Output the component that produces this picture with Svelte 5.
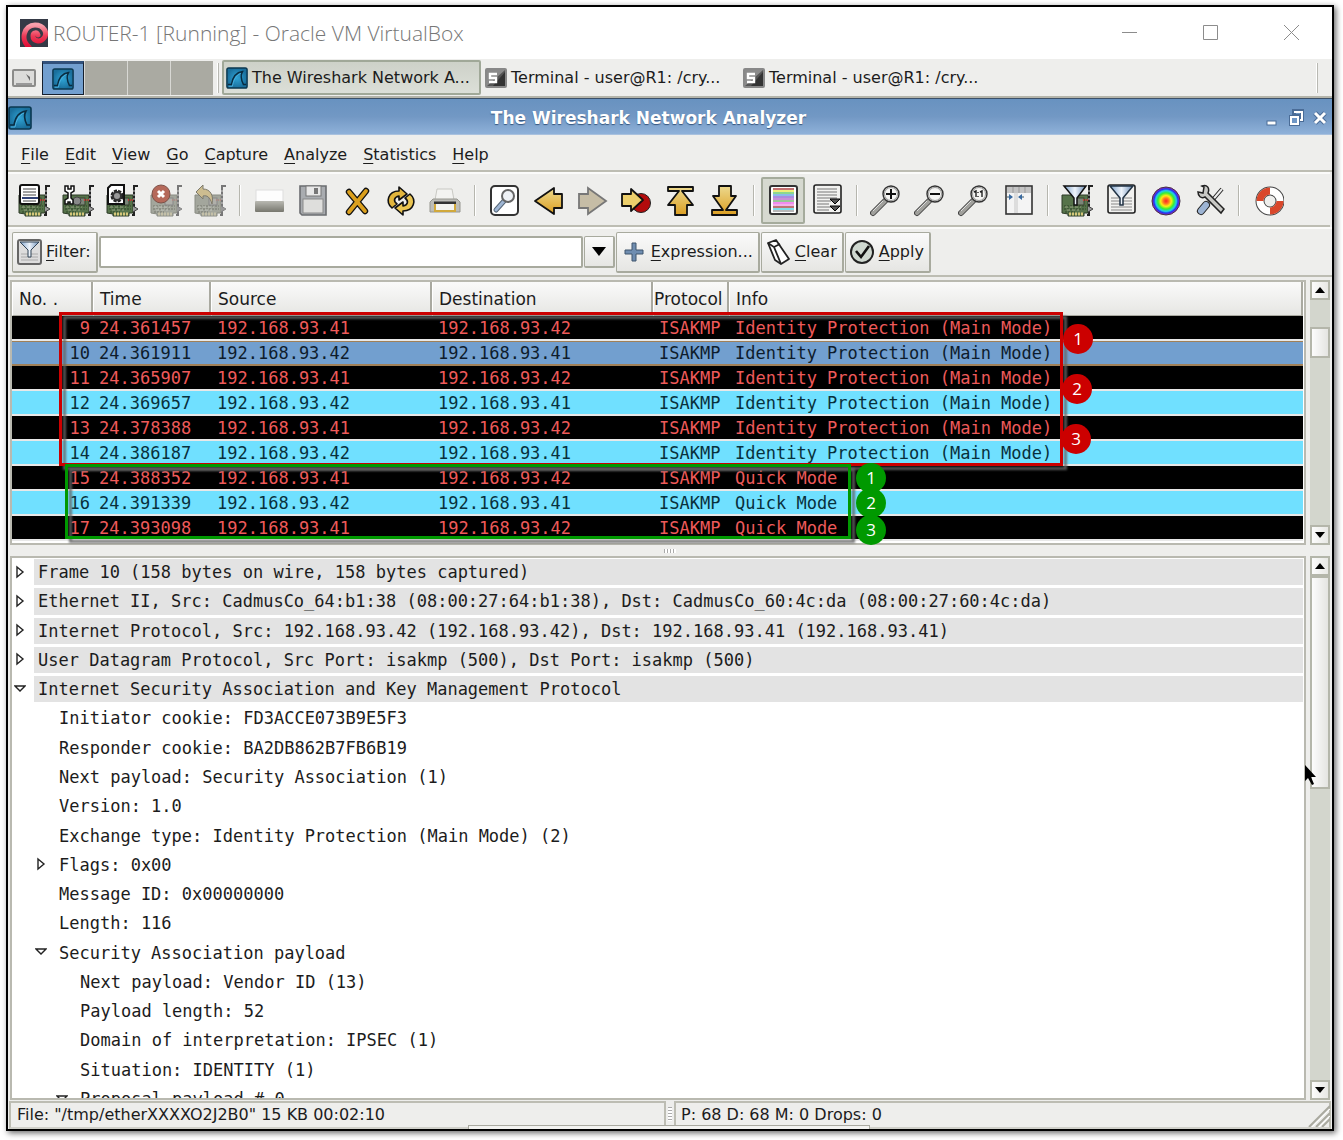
<script lang="ts">
  const columns = ['No. .', 'Time', 'Source', 'Destination', 'Protocol', 'Info'];
  const A = '192.168.93.41';
  const B = '192.168.93.42';
  const MAIN = 'Identity Protection (Main Mode)';
  const packets = [
    { no: 9, time: '24.361457', src: A, dst: B, info: MAIN, tone: 'dark' },
    { no: 10, time: '24.361911', src: B, dst: A, info: MAIN, tone: 'selected' },
    { no: 11, time: '24.365907', src: A, dst: B, info: MAIN, tone: 'dark' },
    { no: 12, time: '24.369657', src: B, dst: A, info: MAIN, tone: 'cyan' },
    { no: 13, time: '24.378388', src: A, dst: B, info: MAIN, tone: 'dark' },
    { no: 14, time: '24.386187', src: B, dst: A, info: MAIN, tone: 'cyan' },
    { no: 15, time: '24.388352', src: A, dst: B, info: 'Quick Mode', tone: 'dark' },
    { no: 16, time: '24.391339', src: B, dst: A, info: 'Quick Mode', tone: 'cyan' },
    { no: 17, time: '24.393098', src: A, dst: B, info: 'Quick Mode', tone: 'dark' }
  ];
  const tree = [
    { level: 0, arrow: 'closed', text: 'Frame 10 (158 bytes on wire, 158 bytes captured)' },
    { level: 0, arrow: 'closed', text: 'Ethernet II, Src: CadmusCo_64:b1:38 (08:00:27:64:b1:38), Dst: CadmusCo_60:4c:da (08:00:27:60:4c:da)' },
    { level: 0, arrow: 'closed', text: 'Internet Protocol, Src: 192.168.93.42 (192.168.93.42), Dst: 192.168.93.41 (192.168.93.41)' },
    { level: 0, arrow: 'closed', text: 'User Datagram Protocol, Src Port: isakmp (500), Dst Port: isakmp (500)' },
    { level: 0, arrow: 'open', text: 'Internet Security Association and Key Management Protocol' },
    { level: 1, arrow: '', text: 'Initiator cookie: FD3ACCE073B9E5F3' },
    { level: 1, arrow: '', text: 'Responder cookie: BA2DB862B7FB6B19' },
    { level: 1, arrow: '', text: 'Next payload: Security Association (1)' },
    { level: 1, arrow: '', text: 'Version: 1.0' },
    { level: 1, arrow: '', text: 'Exchange type: Identity Protection (Main Mode) (2)' },
    { level: 1, arrow: 'closed', text: 'Flags: 0x00' },
    { level: 1, arrow: '', text: 'Message ID: 0x00000000' },
    { level: 1, arrow: '', text: 'Length: 116' },
    { level: 1, arrow: 'open', text: 'Security Association payload' },
    { level: 2, arrow: '', text: 'Next payload: Vendor ID (13)' },
    { level: 2, arrow: '', text: 'Payload length: 52' },
    { level: 2, arrow: '', text: 'Domain of interpretation: IPSEC (1)' },
    { level: 2, arrow: '', text: 'Situation: IDENTITY (1)' },
    { level: 2, arrow: 'open', text: 'Proposal payload # 0' }
  ];
  const menus = ['File', 'Edit', 'View', 'Go', 'Capture', 'Analyze', 'Statistics', 'Help'];
  const tools = [
    'interfaces', 'options', 'start', 'stop', 'restart', '|',
    'open', 'save', 'close', 'reload', 'print', '|',
    'find', 'back', 'forward', 'goto', 'first', 'last', '|',
    'colorize', 'autoscroll', '|',
    'zoom in', 'zoom out', 'zoom 1:1', 'resize columns', '|',
    'capture filters', 'display filters', 'coloring rules', 'preferences', '|', 'help'
  ];
  const stripes = ['#a33', '#e8e840', '#5cc85c', '#5aa0e0', '#8a5ad0', '#b060c8', '#6ab06a', '#e85ae8', '#f090e0', '#a03a3a', '#4ad0e0', '#999'];
  let filter = $state('');
</script>

{#snippet fin(size)}
  <svg class="fin" width={size} height={size} viewBox="0 0 24 24" aria-hidden="true">
    <rect x="1" y="1" width="22" height="22" rx="2" fill="url(#finbg)" stroke="#0b3850" stroke-width="1.6" />
    <path d="M2 19H6C7 13 10 6 18 5C15 10 17 15 19 19H22" fill="none" stroke="#0a2c40" stroke-width="1.6" />
    <path d="M3 21H7C8 15 11 9 16 7" fill="none" stroke="#4db4e0" stroke-width="1" />
  </svg>
{/snippet}

{#snippet term()}
  <svg width="22" height="20" viewBox="0 0 22 20" aria-hidden="true">
    <rect x="1" y="1" width="20" height="18" rx="1" fill="#555" stroke="#888" stroke-width="2" />
    <path d="M2 2H20L2 18Z" fill="#8b8b8b" />
    <path d="M20 4V18H8Z" fill="#333" />
    <path d="M12 6H5V10H11V14H4" fill="none" stroke="#fff" stroke-width="2.4" />
  </svg>
{/snippet}

{#snippet card(faded)}
  <g>
    <path d="M1 11H27V29H23V32H7V30L1 29Z" fill={faded ? '#a3a69c' : '#56734a'} stroke={faded ? '#8a8c83' : '#2c3a26'} stroke-width="1" />
    <path d="M3 22H25M3 25H25M4 28H14" stroke={faded ? '#77796f' : '#2f4428'} stroke-width="1" stroke-dasharray="2 1" />
    <path d="M4 23H20M6 26H18" stroke={faded ? '#c2c4bb' : '#98a384'} stroke-width="1" stroke-dasharray="3 2" />
    <rect x="15" y="14" width="8" height="7" fill={faded ? '#b0b0aa' : '#7b8578'} stroke={faded ? '#888' : '#39432f'} />
    <path d="M22 16H27" stroke={faded ? '#b08a84' : '#c33'} stroke-width="2" stroke-dasharray="1 1" />
    <path d="M8 30H23" stroke={faded ? '#c4c0a8' : '#d6c77a'} stroke-width="3" stroke-dasharray="2 1" />
    <path d="M32 2H28V31H26" fill="none" stroke={faded ? '#777' : '#222'} stroke-width="2" />
    <path d="M27 22L32 25L27 28" fill="#999" stroke={faded ? '#888' : '#444'} stroke-width="1" />
    <path d="M28 6V20" stroke="#ccc" stroke-width="1" stroke-dasharray="2 2" />
  </g>
{/snippet}

{#snippet lens(mark)}
  <path d="M3 29L15 17" stroke="#444" stroke-width="6" stroke-linecap="round" />
  <path d="M3 29L15 17" stroke="#a0a09c" stroke-width="4" stroke-linecap="round" />
  <path d="M3 27L13 17" stroke="#ddd" stroke-width="1" />
  <circle cx="21" cy="10" r="8" fill="#e6e6e2" stroke="#333" stroke-width="1.4" />
  <circle cx="21" cy="10" r="6.5" fill="#f6f6f4" stroke="#999" stroke-width="1" />
  {#if mark === '+'}<path d="M16 10H26M21 5V15" stroke="#111" stroke-width="2" />{/if}
  {#if mark === '-'}<path d="M16 10H26" stroke="#111" stroke-width="2" />{/if}
  {#if mark === '1'}<path d="M16 8L18 7V13M22 8L24 7V13M20 8V9M20 12V13" fill="none" stroke="#222" stroke-width="1.4" />{/if}
{/snippet}

{#snippet icon(name)}
  <svg width="32" height="34" viewBox="0 0 32 34" aria-hidden="true">
    {#if name === 'interfaces'}
      {@render card(false)}
      <rect x="2" y="1" width="19" height="19" rx="2" fill="#fff" stroke="#111" stroke-width="2" />
      <path d="M5 5H18M5 8H18M5 11H18M5 17H18" stroke="#444" stroke-width="1" />
      <path d="M4 14H20" stroke="#347" stroke-width="2" />
    {:else if name === 'options'}
      {@render card(false)}
      <circle cx="15" cy="17" r="4" fill="#888" stroke="#444" />
      <path d="M3 2V7L6 9V14L3 16V20H6V18H8V20H11V16L9 14V9L12 7V2H9V5H6V2Z" fill="#fff" stroke="#111" stroke-width="1.5" />
    {:else if name === 'start'}
      {@render card(false)}
      <path d="M5 1H18V20H2V4Z" fill="#fff" stroke="#111" stroke-width="2" />
      <circle cx="11" cy="12" r="5" fill="none" stroke="#222" stroke-width="3" stroke-dasharray="3 1" />
      <circle cx="11" cy="12" r="4" fill="#999" stroke="#333" stroke-width="2" />
    {:else if name === 'stop'}
      {@render card(true)}
      <circle cx="11" cy="10" r="9" fill="#b5695a" stroke="#7d5148" />
      <path d="M8 7L14 13M14 7L8 13" stroke="#fff" stroke-width="3" />
    {:else if name === 'restart'}
      {@render card(true)}
      <path d="M2 8L9 1V5C16 5 20 11 18 20C16 13 13 11 9 12V15Z" fill="#cdbd90" stroke="#7d7a6c" />
    {:else if name === 'open'}
      <rect x="3" y="6" width="27" height="13" fill="#fdfdfd" stroke="#ddd" />
      <rect x="2" y="17" width="29" height="11" rx="1" fill="url(#drawer)" />
    {:else if name === 'save'}
      <path d="M3 2H29V31H5L3 29Z" fill="#a9acb0" stroke="#6b6d70" stroke-width="1.6" />
      <rect x="9" y="2" width="15" height="10" fill="#e8e8e8" stroke="#777" />
      <rect x="17" y="4" width="4" height="6" fill="#777" />
      <rect x="6" y="15" width="20" height="14" fill="#dededc" stroke="#8a8a8a" />
    {:else if name === 'close'}
      <path d="M8 8L24 27M25 7L8 28" stroke="#111" stroke-width="6.4" stroke-linecap="round" />
      <path d="M8 8L24 27M25 7L8 28" stroke="#dba01e" stroke-width="3.8" stroke-linecap="round" />
    {:else if name === 'reload'}
      <path d="M7 24C0 18 3 7 14 7V3L22 10L14 16V12C9 13 8 17 12 20Z" fill="#e2b53c" stroke="#111" stroke-width="1.6" stroke-linejoin="round" />
      <path d="M25 10C32 16 29 27 18 27V31L10 24L18 18V22C23 21 24 17 20 14Z" fill="#eac552" stroke="#111" stroke-width="1.6" stroke-linejoin="round" />
    {:else if name === 'print'}
      <path d="M8 5H23L25 16H6Z" fill="#f3f3f1" stroke="#c9c9c4" />
      <path d="M4 15H28L31 18V28H1V18Z" fill="#bdbdb8" stroke="#96968f" />
      <path d="M5 19H27" stroke="#333" stroke-width="3" />
      <path d="M6 20V27H26V20" fill="#f4f4f0" stroke="#d1a93c" stroke-width="2" />
    {:else if name === 'find'}
      <rect x="3" y="2" width="27" height="29" rx="4" fill="#fff" stroke="#333" stroke-width="2" />
      <path d="M8 26L16 17" stroke="#567" stroke-width="5" stroke-linecap="round" />
      <path d="M8 26L16 17" stroke="#9fb6d4" stroke-width="3" stroke-linecap="round" />
      <circle cx="20" cy="12" r="6" fill="#eef1f5" stroke="#666" stroke-width="2" />
    {:else if name === 'back'}
      <path d="M3 17L22 4V10H30V24H22V30Z" fill="url(#gold)" stroke="#111" stroke-width="1.8" stroke-linejoin="round" />
    {:else if name === 'forward'}
      <path d="M30 17L12 4V10H3V24H12V30Z" fill="#c6bda6" stroke="#777" stroke-width="1.8" />
    {:else if name === 'goto'}
      <circle cx="21" cy="19" r="9.5" fill="#b30c0c" stroke="#222" stroke-width="1" />
      <path d="M23 16L11 5V10H2V22H11V27Z" fill="#eccf6c" stroke="#111" stroke-width="1.8" stroke-linejoin="round" />
    {:else if name === 'first'}
      <path d="M4 3H29V7H18L29 21H23V31H11V21H4L15 7H4Z" fill="url(#gold)" stroke="#111" stroke-width="1.8" stroke-linejoin="round" />
    {:else if name === 'last'}
      <path d="M4 31H29V26H18L28 12H23V2H11V12H5L15 26H4Z" fill="url(#gold)" stroke="#111" stroke-width="1.8" stroke-linejoin="round" />
    {:else if name === 'colorize'}
      <rect x="3" y="2" width="27" height="28" rx="2" fill="#fff" stroke="#333" stroke-width="2" />
      {#each stripes as c, i}<path d="M6 {5 + i * 2}H27" stroke={c} stroke-width="1.4" />{/each}
    {:else if name === 'autoscroll'}
      <rect x="3" y="1" width="27" height="28" rx="2" fill="#f2f2f0" stroke="#222" stroke-width="1.6" />
      <path d="M6 5H26M6 8H26M6 11H26M6 14H26M6 17H20M6 20H18M6 23H20M6 26H18" stroke="#777" stroke-width="1" />
      <path d="M19 15H29L24 20ZM19 22H29L24 27Z" fill="#555" stroke="#000" />
    {:else if name === 'zoom in'}{@render lens('+')}
    {:else if name === 'zoom out'}{@render lens('-')}
    {:else if name === 'zoom 1:1'}{@render lens('1')}
    {:else if name === 'resize columns'}
      <rect x="4" y="2" width="26" height="28" fill="#f4f4f4" stroke="#333" stroke-width="1.6" />
      <path d="M5 3H29V9H5Z" fill="#c4c4c4" />
      <path d="M12 9H16V29H12Z" fill="#ddd" />
      <path d="M11 3V9M17 3V9M23 3V9" stroke="#999" />
      <path d="M5 13H10M22 13H17" stroke="#356" stroke-width="1" />
      <path d="M7 10L11 13L7 16ZM20 10L16 13L20 16Z" fill="#3a6aa0" />
    {:else if name === 'capture filters'}
      {@render card(false)}
      <path d="M3 2H25L16 14V21H13V14Z" fill="url(#glass)" stroke="#111" stroke-width="1.5" />
    {:else if name === 'display filters'}
      <rect x="3" y="1" width="27" height="28" rx="2" fill="#f2f2f0" stroke="#222" stroke-width="1.6" />
      <path d="M6 14H27M6 17H27M6 20H27M6 23H27M6 26H27" stroke="#888" stroke-width="1" />
      <path d="M5 2H28L18 14V21H15V14Z" fill="url(#glass)" stroke="#234" stroke-width="1.5" />
    {:else if name === 'coloring rules'}
      <circle cx="17" cy="17" r="14" fill="url(#rainbow)" stroke="#434" stroke-width="1" />
    {:else if name === 'preferences'}
      <g transform="translate(2 0)">
        <path d="M27 5L15 19" stroke="#222" stroke-width="4" />
        <path d="M27 5L15 19" stroke="#eee" stroke-width="2" />
        <path d="M6 27L11 21" stroke="#222" stroke-width="8" stroke-linecap="round" />
        <path d="M6 27L11 21" stroke="#9db4d3" stroke-width="6" stroke-linecap="round" />
        <path d="M3 8L8 9L9 3L7 2C12 0 15 4 13 9L29 25L26 29L10 13C6 15 3 12 3 8Z" fill="#c9c9c5" stroke="#222" stroke-width="1.5" />
      </g>
    {:else}
      <circle cx="18" cy="17" r="10" fill="none" stroke="#444" stroke-width="9" />
      <circle cx="18" cy="17" r="10" fill="none" stroke="#fff" stroke-width="7" />
      <path d="M8 17A10 10 0 0 1 18 7M28 17A10 10 0 0 1 18 27" fill="none" stroke="#d9472b" stroke-width="7" />
    {/if}
  </svg>
{/snippet}

{#snippet scrollbar(before, thumb, after)}
  <div class="scrollbar">
    <button class="step" aria-label="Scroll up"><svg width="10" height="6" viewBox="0 0 10 6"><path d="M5 0L10 6H0Z" /></svg></button>
    <div class="trough">
      <div style="flex:{before}"></div>
      <div class="thumb" style="flex:{thumb}"></div>
      <div style="flex:{after}"></div>
    </div>
    <button class="step" aria-label="Scroll down"><svg width="10" height="6" viewBox="0 0 10 6"><path d="M0 0H10L5 6Z" /></svg></button>
  </div>
{/snippet}

<svg class="defs" width="0" height="0" aria-hidden="true">
  <defs>
    <radialGradient id="finbg"><stop offset="0" stop-color="#2fa3d4" /><stop offset="1" stop-color="#1a6f9c" /></radialGradient>
    <linearGradient id="drawer" x2="0" y2="1"><stop offset="0" stop-color="#b9b9b2" /><stop offset="1" stop-color="#77776e" /></linearGradient>
    <linearGradient id="gold" x2="0" y2="1"><stop offset="0" stop-color="#ecd98e" /><stop offset="1" stop-color="#dc9f22" /></linearGradient>
    <linearGradient id="glass"><stop offset="0" stop-color="#7fa3cc" /><stop offset=".5" stop-color="#eef4fb" /><stop offset="1" stop-color="#6d8fb8" /></linearGradient>
    <radialGradient id="rainbow">
      <stop offset="0" stop-color="#f22" /><stop offset=".2" stop-color="#f72" /><stop offset=".38" stop-color="#fe1" />
      <stop offset=".58" stop-color="#3e3" /><stop offset=".74" stop-color="#2ce" /><stop offset=".86" stop-color="#23e" /><stop offset="1" stop-color="#a2b" />
    </radialGradient>
    <linearGradient id="swirl" x2="0" y2="1"><stop offset="0" stop-color="#f8a0ac" /><stop offset=".5" stop-color="#ec3a57" /><stop offset="1" stop-color="#e00c34" /></linearGradient>
  </defs>
</svg>

<main class="window">
  <header class="host-title">
    <svg width="28" height="28" viewBox="0 0 28 28" aria-hidden="true">
      <rect width="28" height="28" fill="#353a46" />
      <path d="M9 28C0 21 4 6 15 6C24 6 28 14 24 19C20 24 13 22 13 17C13 13 17 13 18 16" fill="none" stroke="url(#swirl)" stroke-width="5" stroke-linecap="round" />
    </svg>
    <h1>ROUTER-1 [Running] - Oracle VM VirtualBox</h1>
    <div class="host-buttons">
      <button aria-label="Minimize"><svg width="16" height="16" viewBox="0 0 16 16"><path d="M0 7.5H15" /></svg></button>
      <button aria-label="Maximize"><svg width="16" height="16" viewBox="0 0 16 16"><path d="M.5 .5H14.5V14.5H.5Z" /></svg></button>
      <button aria-label="Close"><svg width="16" height="16" viewBox="0 0 16 16"><path d="M0 0L15 15M15 0L0 15" /></svg></button>
    </div>
  </header>

  <nav class="taskbar" aria-label="Taskbar">
    <button class="panel" aria-label="Show desktop">
      <svg width="24" height="18" viewBox="0 0 24 18"><rect x="1" y="1" width="22" height="16" rx="1" fill="#dcdcda" stroke="#8c8c8a" stroke-width="2" /><path d="M4 15H20" stroke="#999" stroke-width="2" /><path d="M14 5L18 8V12Z" fill="#666" /></svg>
    </button>
    <div class="pager">
      <button class="desk active" aria-label="Workspace 1">{@render fin(22)}</button>
      <button class="desk" aria-label="Workspace 2"></button>
      <button class="desk" aria-label="Workspace 3"></button>
      <button class="desk" aria-label="Workspace 4"></button>
    </div>
    <i class="vline"></i>
    <button class="task current">{@render fin(22)}<span>The Wireshark Network A...</span></button>
    <button class="task">{@render term()}<span>Terminal - user@R1: /cry...</span></button>
    <button class="task">{@render term()}<span>Terminal - user@R1: /cry...</span></button>
    <i class="vline end"></i>
  </nav>

  <header class="app-title">
    {@render fin(24)}
    <h2>The Wireshark Network Analyzer</h2>
    <div class="app-buttons">
      <button aria-label="Minimize"><svg width="14" height="18" viewBox="0 0 14 18"><rect x="2" y="12" width="9" height="4" fill="#fff" stroke="#4a6c97" /></svg></button>
      <button aria-label="Restore"><svg width="16" height="18" viewBox="0 0 16 18"><path d="M6 2H14V11H11V7H6Z" fill="none" stroke="#4a6c97" stroke-width="4" /><path d="M6 3H14V11H12" fill="none" stroke="#fff" stroke-width="2" /><rect x="3" y="8" width="7" height="7" fill="#6f97c6" stroke="#4a6c97" stroke-width="4" /><rect x="3" y="8" width="7" height="7" fill="#6f97c6" stroke="#fff" stroke-width="2" /></svg></button>
      <button aria-label="Close"><svg width="14" height="18" viewBox="0 0 14 18"><path d="M2 4L12 14M12 4L2 14" stroke="#4a6c97" stroke-width="5" /><path d="M2 4L12 14M12 4L2 14" stroke="#fff" stroke-width="3" /></svg></button>
    </div>
  </header>

  <nav class="menubar" aria-label="Menu">
    {#each menus as m}<button><u>{m[0]}</u>{m.slice(1)}</button>{/each}
  </nav>

  <div class="toolbar" role="toolbar" aria-label="Main toolbar">
    {#each tools as t}
      {#if t === '|'}<i class="sep"></i>{:else}<button class="tool" class:pressed={t === 'colorize'} aria-label={t}>{@render icon(t)}</button>{/if}
    {/each}
  </div>

  <div class="filterbar">
    <button class="push">
      <svg width="25" height="26" viewBox="0 0 25 26" aria-hidden="true"><rect x="1" y="1" width="23" height="24" rx="2" fill="#ddd" stroke="#666" stroke-width="2" /><path d="M4 15H21M4 18H21M4 21H21" stroke="#aaa" /><path d="M3 3H22L14 11V18H11V11Z" fill="url(#glass)" stroke="#345" /></svg>
      <span><u>F</u>ilter:</span>
    </button>
    <input aria-label="Filter" bind:value={filter} />
    <button class="combo" aria-label="Filter history"><svg width="14" height="9" viewBox="0 0 14 9"><path d="M0 0H14L7 9Z" /></svg></button>
    <button class="push">
      <svg width="26" height="22" viewBox="-3 0 26 22" aria-hidden="true"><path d="M8 2H12V9H19V13H12V20H8V13H1V9H8Z" fill="#6f8db0" stroke="#3f546c" /></svg>
      <span><u>E</u>xpression...</span>
    </button>
    <button class="push">
      <svg width="25" height="26" viewBox="0 0 25 26" aria-hidden="true"><path d="M2 4L10 1L23 20L15 25L9 21Z" fill="#fff" stroke="#222" stroke-width="1.8" stroke-linejoin="round" /><path d="M2 4L8 8L15 25M8 8L14 5" fill="none" stroke="#222" stroke-width="1.8" /></svg>
      <span><u>C</u>lear</span>
    </button>
    <button class="push">
      <svg width="25" height="26" viewBox="0 0 25 26" aria-hidden="true"><circle cx="12" cy="13" r="11" fill="#cfd8d0" stroke="#222" stroke-width="2" /><path d="M6 12L11 18L19 7" fill="none" stroke="#111" stroke-width="2.6" /></svg>
      <span><u>A</u>pply</span>
    </button>
  </div>

  <section class="list-row">
    <div class="pane list">
      <table>
        <colgroup><col class="c1" /><col class="c2" /><col class="c3" /><col class="c3" /><col class="c5" /><col /></colgroup>
        <thead><tr>{#each columns as c}<th scope="col">{c}</th>{/each}</tr></thead>
        <tbody>
          {#each packets as p}
            <tr class={p.tone}>
              <td class="num">{p.no}</td><td>{p.time}</td><td>{p.src}</td><td>{p.dst}</td><td>ISAKMP</td><td>{p.info}</td>
            </tr>
          {/each}
        </tbody>
      </table>
      <div class="mark main-mode"></div>
      <div class="mark quick-mode"></div>
      <b class="badge red m1">1</b><b class="badge red m2">2</b><b class="badge red m3">3</b>
      <b class="badge green q1">1</b><b class="badge green q2">2</b><b class="badge green q3">3</b>
    </div>
    {@render scrollbar(27, 28, 170)}
  </section>

  <div class="splitter"><i></i></div>

  <section class="tree-row">
    <ul class="pane tree">
      {#each tree as n}
        <li class="l{n.level}">
          <span class="arrow">
            {#if n.arrow === 'closed'}<svg width="12" height="14" viewBox="0 0 12 14"><path d="M3 2L9 7L3 12Z" /></svg>{/if}
            {#if n.arrow === 'open'}<svg width="12" height="14" viewBox="0 0 12 14"><path d="M1 4H11L6 9Z" /></svg>{/if}
          </span>
          <span class="text">{n.text}</span>
        </li>
      {/each}
    </ul>
    {@render scrollbar(0, 211, 293)}
    <svg class="pointer" width="13" height="20" viewBox="0 0 13 20" aria-hidden="true"><path d="M1 0V16L4 13L8 20L10 19L7 12H12Z" /></svg>
  </section>

  <footer class="status">
    <div class="cell file">File: "/tmp/etherXXXXO2J2B0" 15 KB 00:02:10</div>
    <i class="grip"></i>
    <div class="cell">P: 68 D: 68 M: 0 Drops: 0</div>
    <svg class="corner" width="22" height="22" viewBox="0 0 22 22" aria-hidden="true"><path d="M1 22L22 1M8 22L22 8M14 22L22 14" stroke="#a9a99f" stroke-width="2" /><path d="M4 22L22 4M11 22L22 11" stroke="#fff" /></svg>
    <i class="tray"></i>
  </footer>
</main>

<style>
  :global(body) { background: #fff; }
  .defs { position: absolute; }
  .window {
    box-sizing: border-box;
    display: flex;
    flex-direction: column;
    height: calc(100vh - 14px);
    margin: 5px 9px 9px 6px;
    border: 2px solid #000;
    background: #eeeeec;
    box-shadow: 2px 2px 6px rgba(0, 0, 0, .6);
    overflow: hidden;
    font: 16px/24px "DejaVu Sans", sans-serif;
    color: #1c1c1c;
  }
  button { font: inherit; color: inherit; background: none; border: 0; padding: 0; margin: 0; display: flex; align-items: center; white-space: nowrap; }
  h1, h2 { margin: 0; font-weight: 400; white-space: nowrap; }
  u { text-decoration-thickness: 1px; text-underline-offset: 3px; }
  svg { display: block; flex: none; }
  .host-title { display: flex; align-items: center; gap: 5px; height: 52px; padding: 0 32px 0 12px; background: #fff; flex: none; }
  h1 { font: 300 21px/30px "Open Sans", "Noto Sans", sans-serif; color: #777; flex: 1; }
  .host-buttons { display: flex; gap: 65px; }
  .host-buttons path { fill: none; stroke: #8c8c8c; stroke-width: 1; }

  .taskbar { display: flex; align-items: center; height: 37px; flex: none; padding: 0 14px 0 4px; border-bottom: 2px solid #b4b4aa; box-sizing: content-box; }
  .panel { margin-right: 6px; }
  .pager { display: flex; gap: 1px; background: #d8d8d4; }
  .desk { width: 42px; height: 34px; background: #aaaaa2; justify-content: center; box-sizing: border-box; }
  .desk.active { background: #729fcf; border: 1px solid #16202e; border-top: 3px solid #31507a; }
  .vline { width: 2px; height: 30px; border-right: 1px solid #b8b8b2; background: #fff; box-sizing: border-box; margin: 0 3px 0 4px; }
  .vline.end { margin-left: auto; margin-right: 0; }
  .task { box-sizing: border-box; width: 258px; height: 35px; padding: 0 4px; gap: 4px; }
  .task.current { width: 259px; background: linear-gradient(#cdd1c8, #dcdfd8); border: 2px solid #a0a898; border-radius: 2px; padding: 0 2px; }

  .app-title { display: flex; align-items: center; height: 37px; flex: none; box-sizing: border-box; padding-top: 2px; border-top: 1px solid #3c5068; border-bottom: 1px solid #a9c1de; background: linear-gradient(#6892c0, #7298c4 50%, #8fb1d9); padding-right: 5px; }
  h2 { flex: 1; text-align: center; font: 700 17px/24px "DejaVu Sans", sans-serif; color: #fff; text-shadow: 0 1px 1px #36567f; }
  .app-buttons { display: flex; gap: 9px; }

  .menubar { display: flex; gap: 16px; height: 31px; align-items: center; padding: 4px 13px 0; flex: none; border-bottom: 2px solid #bdbdb3; }
  .toolbar { display: flex; align-items: center; height: 49px; padding: 2px 0 0 4px; flex: none; border-top: 2px solid #fbfbfa; border-bottom: 2px solid #bdbdb3; margin: 0 2px 0 0; }
  .tool { width: 44px; height: 47px; justify-content: center; box-sizing: border-box; flex: none; }
  .tool.pressed { background: #d6d9d0; border: 2px solid #a5ab9c; border-radius: 2px; }
  .sep { width: 15px; height: 31px; flex: none; background: linear-gradient(90deg, transparent 7px, #b6b6ae 7px, #b6b6ae 8px, #fff 8px, #fff 9px, transparent 9px); }

  .filterbar { display: flex; align-items: center; gap: 1px; height: 46px; padding: 0 4px; flex: none; border-top: 2px solid #fbfbfa; border-bottom: 2px solid #bdbdb3; }
  .push, .combo { box-sizing: border-box; height: 41px; padding: 0 5px 0 4px; gap: 4px; border: 1px solid #a8aa9e; border-bottom-width: 2px; border-right-width: 2px; border-radius: 2px; background: linear-gradient(#fafafa, #e6e6e3); }
  input { box-sizing: border-box; width: 484px; height: 32px; min-width: 0; border: 2px solid #a8aa9e; border-radius: 2px; background: #fff; font: inherit; padding: 0 4px; margin: 0; outline: 0; }
  .combo { width: 31px; height: 32px; padding: 0; justify-content: center; }

  .pane { box-sizing: border-box; flex: 1; min-width: 0; border: 2px solid #b9b9b0; background: #fff; margin: 0; }
  .list-row { display: flex; gap: 4px; padding: 3px 2px 0; flex: none; }
  .list { position: relative; height: 265px; padding-right: 1px; }
  table { width: 100%; border-collapse: separate; border-spacing: 0; table-layout: fixed; }
  .c1 { width: 81px; } .c2 { width: 118px; } .c3 { width: 221px; } .c5 { width: 76px; }
  th { box-sizing: border-box; height: 34px; padding: 0 0 0 6px; text-align: left; font-size: 17px; font-weight: 400; background: linear-gradient(#fafafa, #e6e6e3); border-right: 2px solid #a9a9a0; border-bottom: 1px solid #a9a9a0; border-left: 1px solid #fff; white-space: nowrap; }
  th:nth-child(5) { padding-left: 0; }
  td { box-sizing: border-box; height: 25px; padding: 0 0 0 6px; font: 17px/22px "DejaVu Sans Mono", monospace; white-space: nowrap; overflow: hidden; border-bottom: 2px solid #e8e8e8; }
  td.num { text-align: right; padding: 0 3px 0 0; }
  .dark td { background: #000; color: #ee5a5a; }
  .cyan td { background: #70e0ff; color: #08303c; }
  .selected td { background: #729fcf; color: #0e1c2c; border-bottom-color: #a08058; border-top: 1px solid #a08058; }

  .mark { position: absolute; box-sizing: border-box; filter: drop-shadow(4px 4px 1px rgba(100, 100, 100, .85)); }
  .main-mode { left: 47px; top: 30px; width: 1004px; height: 154px; border: 3px solid #c00; }
  .quick-mode { left: 53px; top: 182px; width: 786px; height: 75px; border: 3px solid #090; }
  .badge { position: absolute; width: 30px; height: 30px; border-radius: 50%; color: #fff; text-align: center; font: 400 17px/30px "Open Sans", sans-serif; }
  .red { background: #c00; } .green { background: #090; }
  .m1 { left: 1051px; top: 42px; } .m2 { left: 1050px; top: 92px; } .m3 { left: 1049px; top: 142px; }
  .q1 { left: 844px; top: 181px; } .q2 { left: 844px; top: 206px; } .q3 { left: 844px; top: 233px; }

  .scrollbar { width: 20px; display: flex; flex-direction: column; flex: none; background: #d3d6cd; }
  .step { width: 20px; height: 20px; box-sizing: border-box; justify-content: center; border: 2px solid #b4b6aa; background: linear-gradient(90deg, #fcfcfc, #e8e8e5); }
  .trough { flex: 1; display: flex; flex-direction: column; }
  .thumb { border: 2px solid #b4b6aa; box-sizing: border-box; background: linear-gradient(90deg, #fcfcfc, #e4e4e1); }

  .splitter { height: 11px; flex: none; display: flex; align-items: center; justify-content: center; }
  .splitter i, .grip { background: repeating-linear-gradient(90deg, #aaa 0 1px, #fff 1px 3px); width: 12px; height: 4px; }

  .tree-row { position: relative; display: flex; gap: 4px; padding: 0 2px; flex: 1; min-height: 0; }
  .tree { display: grid; grid-template-rows: repeat(18, minmax(0, 1fr)) 13px; list-style: none; padding: 0 1px 0 0; overflow: hidden; }
  li { display: flex; min-height: 0; overflow: hidden; font: 17px/29px "DejaVu Sans Mono", monospace; white-space: pre; }
  .arrow { width: 22px; height: 27px; flex: none; display: flex; align-items: center; padding-left: 2px; box-sizing: border-box; }
  .arrow path { fill: #fff; stroke: #222; stroke-width: 1.4; }
  .text { flex: 1; padding-left: 4px; }
  .l0 .text { background: #e3e3e3; border-bottom: 2px solid #fff; border-top: 1px solid #fff; line-height: 27px; }
  .l1 { padding-left: 21px; }
  .l2 { padding-left: 42px; }
  .pointer { position: absolute; right: 15px; top: 209px; }

  .status { position: relative; display: flex; height: 29px; padding: 1px 1px 0 1px; flex: none; box-sizing: border-box; }
  .cell { flex: 1; box-sizing: border-box; border: 2px solid #bdbdb3; border-bottom-color: #d0d0ca; padding-left: 5px; line-height: 24px; white-space: nowrap; overflow: hidden; }
  .cell.file { flex: none; width: calc(50% - 4px); padding-left: 6px; }
  .grip { width: 4px; height: 14px; margin: 6px 2px; background: repeating-linear-gradient(#aaa 0 1px, #fff 1px 3px); }
  .corner { position: absolute; right: 2px; bottom: 2px; }
  .tray { position: absolute; left: calc(35% - 3px); bottom: 0; width: 402px; height: 4px; box-sizing: border-box; background: #f2f2f0; border: 1px solid #a9a9a0; border-bottom: 0; }
</style>
